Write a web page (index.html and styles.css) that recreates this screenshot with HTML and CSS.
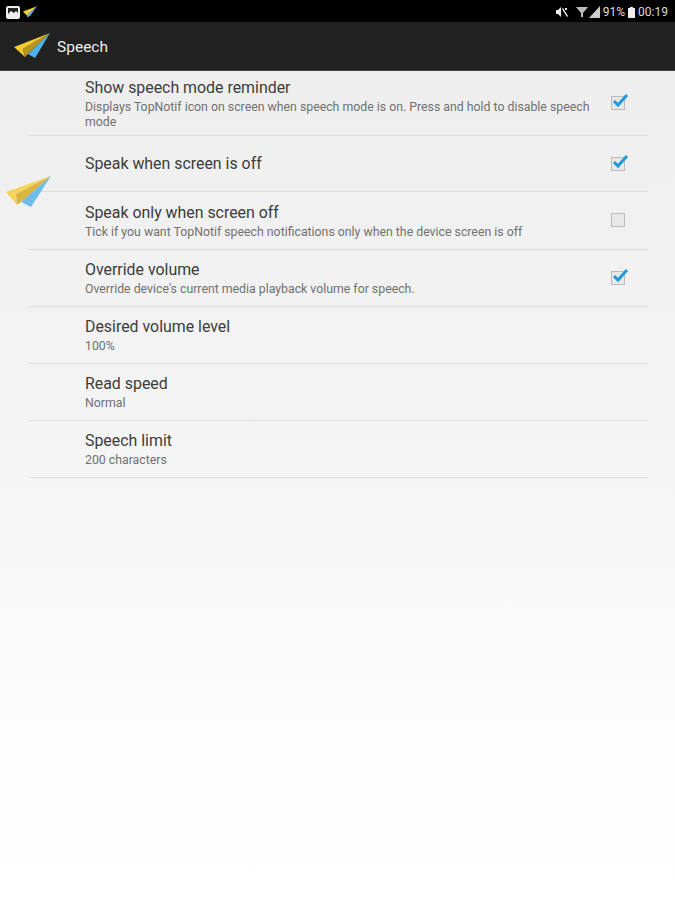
FILE: index.html
```html
<!DOCTYPE html>
<html lang="en">
<head>
<meta charset="UTF-8">
<meta name="viewport" content="width=device-width, initial-scale=1.0">
<title>Speech</title>
<link rel="stylesheet" href="styles.css">
</head>
<body>

<div class="status-bar">
    <div class="status-left">
        <svg width="14" height="13" viewBox="0 0 14 13">
            <rect width="14" height="13" rx="2" fill="#eee"/>
            <path d="M2 8l3-3 3 2 2-2 2 2V2H2z" fill="#222"/>
        </svg>
        <svg width="14" height="12" viewBox="0 0 36 30">
            <path d="M0 14L36 0 10 24z" fill="#f4cf3f"/>
            <path d="M36 0L10 24l2 5 7-5z" fill="#5db8ea"/>
        </svg>
    </div>
    <div class="status-right">
        <svg width="13" height="12" viewBox="0 0 13 12">
            <path d="M0 4h2l3-3v10L2 8H0zM7 2l5 8-1 1-5-8zM9 2h2v2H9z" fill="#eee"/>
        </svg>
        <svg class="status-wifi" width="12" height="12" viewBox="0 0 12 12">
            <path d="M0 1h12L7 7v4H5V7z" fill="#bbb"/>
        </svg>
        <svg class="status-signal" width="11" height="12" viewBox="0 0 11 12">
            <path d="M11 0v12H0z" fill="#ccc"/>
        </svg>
        <span class="status-text">91%</span>
        <svg width="7" height="11" viewBox="0 0 7 11">
            <path d="M2 0h3v1h2v10H0V1h2z" fill="#eee"/>
        </svg>
        <span class="status-text">00:19</span>
    </div>
</div>

<div class="action-bar">
    <svg class="logo" width="36" height="26" viewBox="0 0 36 26">
        <path d="M0 14L36 0 9 16l2 8z" fill="#f2c92f"/>
        <path d="M36 0L9 16l2 8 3-3z" fill="#b8961f"/>
        <path d="M36 0L14 21l7 4z" fill="#4fb2e8"/>
    </svg>
    <span class="action-title">Speech</span>
</div>

<div class="content">
    <svg class="floating-icon" width="45" height="32" viewBox="0 0 45 32">
        <path d="M0 16L45 0 10 18l1 11z" fill="#f5d458"/>
        <path d="M45 0L10 18l1 11 4-3z" fill="#d9b640"/>
        <path d="M45 0L15 26l10 5z" fill="#6fbdef"/>
    </svg>

    <div class="list">
        <div class="row row-first">
            <div class="row-text">
                <div class="row-title">Show speech mode reminder</div>
                <div class="row-sub">Displays TopNotif icon on screen when speech mode is on. Press and hold to disable speech mode</div>
            </div>
            <span class="check"><svg width="19" height="16" viewBox="0 0 19 16"><path d="M3 8l4 4 9-10" fill="none" stroke="#1f9ad6" stroke-width="3"/></svg></span>
        </div>
        <div class="row row-single">
            <div class="row-text">
                <div class="row-title">Speak when screen is off</div>
            </div>
            <span class="check"><svg width="19" height="16" viewBox="0 0 19 16"><path d="M3 8l4 4 9-10" fill="none" stroke="#1f9ad6" stroke-width="3"/></svg></span>
        </div>
        <div class="row row-tall">
            <div class="row-text">
                <div class="row-title">Speak only when screen off</div>
                <div class="row-sub">Tick if you want TopNotif speech notifications only when the device screen is off</div>
            </div>
            <span class="check"></span>
        </div>
        <div class="row">
            <div class="row-text">
                <div class="row-title">Override volume</div>
                <div class="row-sub">Override device's current media playback volume for speech.</div>
            </div>
            <span class="check"><svg width="19" height="16" viewBox="0 0 19 16"><path d="M3 8l4 4 9-10" fill="none" stroke="#1f9ad6" stroke-width="3"/></svg></span>
        </div>
        <div class="row">
            <div class="row-text">
                <div class="row-title">Desired volume level</div>
                <div class="row-sub">100%</div>
            </div>
        </div>
        <div class="row">
            <div class="row-text">
                <div class="row-title">Read speed</div>
                <div class="row-sub">Normal</div>
            </div>
        </div>
        <div class="row">
            <div class="row-text">
                <div class="row-title">Speech limit</div>
                <div class="row-sub">200 characters</div>
            </div>
        </div>
    </div>
</div>

</body>
</html>
```

FILE: styles.css
```css
body {
    font-family: Roboto, "Liberation Sans", sans-serif;
    margin: 0;
    height: 900px;
    overflow: hidden;
    background-color: #fff;
    display: flex;
    flex-direction: column;
}

.status-bar {
    background-color: #000;
    height: 22px;
    display: flex;
    justify-content: space-between;
    align-items: center;
    padding: 2px 7px 0 6px;
    box-sizing: border-box;
}

.status-left, .status-right {
    display: flex;
    align-items: center;
    gap: 3px;
}

.status-wifi {
    margin-left: 4px;
}

.status-signal {
    margin-left: -2px;
}

.status-text {
    color: #ddd;
    font-size: 12px;
}

.action-bar {
    background-color: #222;
    height: 49px;
    box-sizing: border-box;
    border-bottom: 1px solid #444;
    display: flex;
    align-items: center;
    padding-left: 14px;
    gap: 7px;
}

.action-title {
    color: #eee;
    font-size: 15.5px;
    padding-top: 2px;
}

.content {
    position: relative;
    flex: 1;
    background: linear-gradient(#eee 0, #f5f5f5 48%, #fdfdfd 81%, #fff 100%);
}

.floating-icon {
    position: absolute;
    left: 6px;
    top: 105px;
}

.list {
    margin: 0 27px 0 28px;
}

.row {
    height: 57px;
    box-sizing: border-box;
    border-bottom: 1px solid #dcdcdc;
    display: flex;
    align-items: center;
    justify-content: space-between;
    padding: 0 23px 0 57px;
}

.row-first {
    height: 65px;
}

.row-single {
    height: 56px;
}

.row-tall {
    height: 58px;
}

.row-first .row-text, .row-tall .row-text {
    padding-top: 2px;
}

.row-tall .check {
    margin-bottom: 2px;
}

.row-text {
    flex: 1;
    padding-right: 20px;
}

.row-title {
    color: #3c3c3c;
    font-size: 15.9px;
    line-height: 20px;
}

.row-sub {
    color: #707070;
    font-size: 12.3px;
    line-height: 15px;
    margin-top: 2px;
}

.check {
    position: relative;
    flex: none;
    width: 12px;
    height: 12px;
    border: 1px solid #bbb;
    background-color: #e8e8e8;
}

.check svg {
    position: absolute;
    left: -1px;
    top: -4px;
}
```
